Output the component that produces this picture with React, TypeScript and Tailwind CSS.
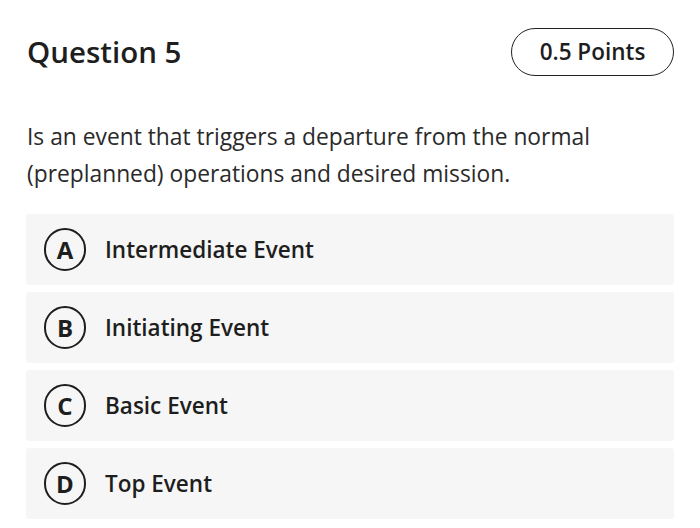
import React from "react";

const options = [
  { k: "A", t: "Intermediate Event" },
  { k: "B", t: "Initiating Event" },
  { k: "C", t: "Basic Event" },
  { k: "D", t: "Top Event" },
];

export default function App() {
  return (
    <div
      className="w-[700px] h-[528px] bg-white text-[#1e1e1e] px-[26px] pt-[28px]"
      style={{ fontFamily: '"Open Sans", "Noto Sans", sans-serif' }}
    >
      <div className="flex items-center justify-between">
        <div className="pl-[1px] text-[29.5px] font-semibold leading-none">Question 5</div>
        <div className="w-[163px] h-[48px] rounded-full border-[1.5px] border-[#222] flex items-center justify-center text-[22.5px] font-semibold">
          0.5 Points
        </div>
      </div>
      <p className="mt-[42px] pl-[1px] text-[22.8px] leading-[37px] text-[#2a2a2a]">
        Is an event that triggers a departure from the normal
        <br />
        (preplanned) operations and desired mission.
      </p>
      <div className="mt-[22px] flex flex-col gap-[7px]">
        {options.map((o) => (
          <div
            key={o.k}
            className="h-[71px] bg-[#f6f6f6] rounded-[3px] flex items-center pl-[18px]"
          >
            <div className="w-[42px] h-[43px] shrink-0 rounded-full border-[2.5px] border-[#1e1e1e] flex items-center justify-center">
              <span className="text-[24px] leading-none font-bold">{o.k}</span>
            </div>
            <div className="ml-[19px] text-[22.5px] font-semibold">{o.t}</div>
          </div>
        ))}
      </div>
    </div>
  );
}
